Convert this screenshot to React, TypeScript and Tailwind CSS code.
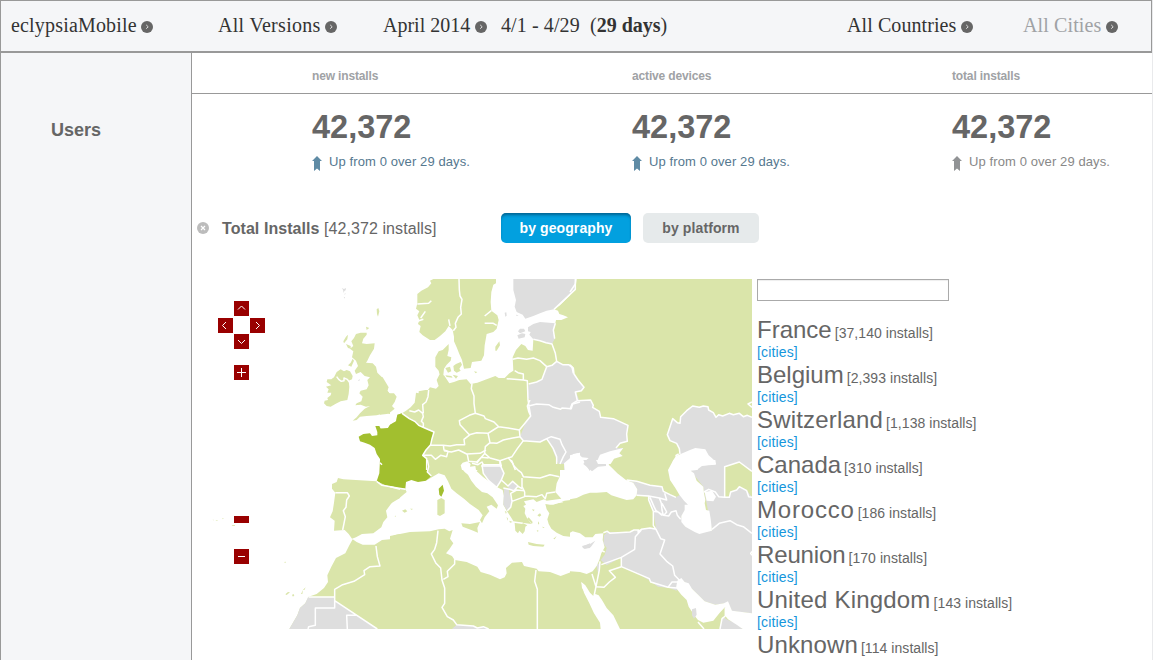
import React from "react";

type Tile = {
  x: number;
  y: number;
  land?: string;
  gray?: string;
  inner?: string;
  water?: string;
  grayIsles?: string;
  active?: string;
  borders?: string;
};

/* The map is stored as six tiles, each at three units per pixel. */
const tiles: Tile[] = [
  {
    x: 190,
    y: 270,
    land:
      "M560 118l5-4 3 10-4 16-3-8zM528 170l10 4-8 6z M498 192L512 188 530 188 530 194 520 206 516 220 530 222 554 220 552 236 540 256 532 272 528 278 548 280 558 290 562 308 576 322 584 340 594 350 592 362 600 372V432L584 430 560 436 530 438 510 440 500 450 488 452 500 442 510 430 524 416 540 408 528 410 512 404 496 406 500 400 514 394 518 380 508 370 512 362 530 358 536 346 532 330 540 322 524 318 512 306 498 312 494 302 504 288 498 272 486 262 490 244 480 236 490 228 484 214 492 204Z M460 214l8-14 6-6-2 14-10 12zM468 222l14 6 0 8-8-2zM474 286l8-8 6-12 4 6-8 18z M410 336L412 328 424 328 432 322 440 306 452 298 462 304 470 300 480 304 488 318 486 328 476 332 478 350 476 372 472 390 452 394 436 402 422 410 410 408 402 400 404 392 414 390 412 384 422 376 424 368 412 368 416 358 408 350 424 346Z",
    grayIsles: "M455 54l7 3 6-3-1 7-4 2-2 6-2-10zM463 72l4-3-2 5zM461 80l4 2-1 4zM504 332l5-6-1 7z",
    active:
      "M506 500L520 492 540 490 546 498 562 496 562 486 556 468 568 468 572 476 588 478 600 474V600H574L572 570 560 552 554 534 540 524 524 518 510 514Z",
    borders: "M440 320L446 328 454 334 462 332 462 324 472 328 478 336",
  },
  {
    x: 380,
    y: 270,
    land:
      "M0 320L8 322 18 338 26 352 22 362 28 370 42 370 50 380 44 396 36 408 44 416 32 426 20 432 0 434Z M160 27L150 32 154 40 144 52 124 62 112 72 112 100 108 116 118 124 112 136 118 150 114 162 122 168 118 186 128 196 150 210 164 210 180 198 196 184 206 168 218 180 222 200 222 214 230 232 238 252 246 270 252 296 272 294 276 276 304 272 312 256 314 226 320 192 340 186 350 176 356 150 352 136 334 122 332 96 334 66 340 44 348 40 348 27Z M346 230L358 214 360 226 350 242 346 242Z M166 262L176 244 188 240 206 222 206 240 202 258 214 262 212 272 200 284 192 296 190 316 180 318 176 302 166 290Z M196 294L210 290 214 304 204 308Z M220 288L228 282 242 276 246 284 238 296 242 302 230 308 222 302ZM196 316l18 2 4 5-18-2zM218 314l16 4-6 8zM282 304l10 2-5 4z M0 476L24 474 30 464 48 454 52 434 66 430 78 422 92 412 104 398 106 384 108 368 116 370 116 364 136 360 144 360 150 352 168 356 176 348 170 330 178 314 192 316 200 328 208 340 222 336 238 330 260 328 272 342 292 338 314 330 346 318 356 324 374 324 388 310 400 302 398 262 408 240 424 222 436 228 444 240 458 242 460 208 480 210 510 220 524 206 520 180 526 160 528 150 544 150 564 142 550 136 538 132 534 122 522 118 540 106 586 60V27H600V600H0Z",
    gray:
      "M400 27H586V56L522 118 500 122 480 130 460 138 436 146 428 134 410 126 404 110 408 90 400 60ZM444 172L460 162 480 156 526 160 520 180 524 206 516 222 498 218 480 212 460 208 448 194 452 186 444 184ZM446 344L470 336 486 328 500 290 516 286 530 274 548 284 566 284 576 292 584 320 600 348 588 364 600 398 578 400 574 416 544 416 520 410 506 404 446 408 450 390 442 380ZM446 408L470 402 506 404 540 418 574 416 578 400 600 396V600H552V582L534 580 526 560 510 520 500 510 480 516 430 512 420 500 436 460 452 438ZM304 588L330 584 360 588 364 600H310Z",
    water:
      "M246 600L242 586 248 578 262 574 272 582 270 590 286 588 288 600ZM600 548L580 552 568 566 552 580 554 600H600Z",
    grayIsles: "M374 128l5-1 1 10-4 3zM408 134l8 2-6 2zM414 184L420 176 432 176 436 184 420 190ZM412 196L426 190 436 192 434 202 416 206Z",
    active:
      "M0 476L24 474 30 464 48 454 52 434 66 430 88 446 104 454 116 466 134 474 162 486 156 506 152 524 138 540 128 556 140 566V600H0Z",
    borders:
      "M112 102L146 100 154 92M136 124L122 144M112 154L130 148M314 160L340 160 350 166M314 138L334 122M206 148L210 168M237 27L238 60 240 78 246 88 242 112 244 132 234 142 226 160 228 172 220 182M66 430L88 446 104 454 116 466 134 474 162 486 156 506 152 524 138 540 128 556 140 566V600M88 422L104 426 116 420 128 430 130 440 124 454 130 460V474M146 360L144 380 138 396 128 404 130 430M276 340L274 356 282 378 282 400 286 430 268 436 238 452 240 464 268 494 290 488 324 490 340 480 356 470 342 456 316 446 312 438 286 430M356 470L384 474 418 480 436 458 452 438 444 390 442 332 430 330 380 326M430 330V312L414 308 404 302M398 268L414 264 440 268 460 264 480 272 500 290 486 328 470 336 446 342M500 290L516 286 530 274 548 284 566 284 576 292 580 310M446 408L470 402 506 404 520 412 542 418 546 414 574 416 578 402 600 396M452 438L446 424 442 408 450 390M418 480L420 500 430 512 480 516 500 506M460 208L480 212 498 218 516 222 526 250 530 274M526 160L520 180 524 206M586 27V58L522 118M324 490L330 518 350 520 370 510 398 504 420 500 418 480M330 518L316 530 314 550 330 564 360 572 396 560 412 536 430 512M152 526L190 526 210 528 230 524 254 524 252 508 270 494M192 542L214 546 236 540 260 552 300 550 318 540M128 556L154 556 166 568 182 556 200 560 204 544 192 540 190 526M262 554L266 574 290 576 304 562 316 548M290 580L304 562 326 564M360 572L364 588 304 588M384 562L398 580 406 600M500 506L514 500 540 508 546 524 558 546 550 560 540 582M500 506L520 536 530 560 530 582",
  },
  {
    x: 570,
    y: 270,
    land: "M0 27H546V600H0Z",
    gray:
      "M0 27H18L16 42 0 66Z M0 284L10 294 12 312 24 330 42 352 34 362 16 366 22 392 62 390 70 406 68 412 88 424 92 442 130 446 174 466 170 492 172 514 150 520 138 534 160 534 124 560 90 600H0Z M546 442L532 436 520 440 508 430 490 434 478 430 458 438 446 434 438 442 430 428 416 420 414 410 400 408 388 412 368 408 350 422 332 440 330 460 322 458 308 446 300 470 292 494 300 512 320 520 328 536 330 552 340 556 346 600H546Z",
    inner: "M464 594L508 578 540 600H464Z",
    water:
      "M80 576L90 554 120 544 160 534 148 550 158 558 132 566 122 582 100 582Z M0 556L24 550 36 562 56 564 40 578 54 600H0ZM84 582L114 584 128 600H84Z M300 600L310 570 318 558 332 552 360 540 376 534 406 538 416 556 432 570 438 584 378 588 384 600Z",
    borders:
      "M18 27L16 42 0 66M0 284L10 294 12 312 24 330 42 352 34 362 16 366 22 392 62 390 70 406 68 412 88 424 92 442 130 446 174 466 170 492 172 514 150 520 138 534M22 392L6 402 0 418M546 442L532 436 520 440 508 430 490 434 478 430 458 438 446 434 438 442 430 428 416 420 414 410 400 408 388 412 368 408 350 422 332 440 330 460 322 458 308 446 300 470 292 494 300 512 320 520 328 536 330 552M546 396L534 402 546 412M326 552L318 556 322 566",
  },
  {
    x: 200,
    y: 460,
    land:
      "M396 72L410 66 414 54 430 58 530 64 556 76 600 86V114L580 122 558 152 562 172 550 186 544 202 530 212 520 220 486 222 468 232 456 236 446 222 434 210 402 212 404 182 390 172 398 154 402 128 406 98 396 86ZM458 238L470 246 488 254 524 254 546 240 570 238 582 226 600 222V507H268L292 466 300 444 316 430 326 410 350 402 372 384 384 366 382 346 394 320 408 294 436 280 448 256ZM38 179l6 1-5 1zM46 181l8 0-3 2zM66 175l5 0-2 3zM95 196l9-1 1 3-8 0zM252 306l6-1-2 4zM264 297l3 1zM256 403l8-7 6 1-10 8zM276 405l4-3 3 4-4 4zM303 402l6-12-2 12zM309 389l8-7-4 8z",
    gray: "M324 412H404V422L532 507H268L292 466 300 444 316 430Z",
    active: "M540 0H600V86L575 80 556 76 530 64 538 40Z",
    borders:
      "M326 411H404V444H346V496L326 500 324 507M442 507L440 466H470M404 422L532 507M404 412V388L428 374 462 364 494 344 492 332 510 320 540 318 532 290 528 258M406 98L442 98 448 108 440 120 438 142 430 152 436 170 432 190 428 210M530 64L546 76 572 80 600 88M540 8L546 14",
  },
  {
    x: 390,
    y: 460,
    land:
      "M0 80L46 88 50 96 40 104 26 116 0 132Z M142 120L154 114 164 120 164 160 150 168 142 164Z M112 0H240L236 8 212 12 212 22 224 36 234 44 244 62 258 80 276 96 292 100 308 112 324 136 320 146 304 134 290 140 298 154 284 172 276 190 270 180 278 166 266 150 240 132 222 116 200 100 184 86 174 64 164 46 146 40 132 48 112 60Z M214 190L240 192 270 186 262 204 264 218 244 210 218 200Z M242 0L246 12 256 12 268 24 260 34 280 52 300 66 322 82 338 90 342 108 340 134 350 152 362 170 374 190 376 212 384 220 388 212 398 222 404 214 406 200 412 196 396 188 424 192 412 176 404 160 406 146 400 138 408 134 402 124 430 118 440 126 462 118 470 122 514 116 496 96 500 70 510 48 510 0Z M466 132L480 134 490 134 524 122 560 118 600 96V230L570 218 548 214 540 230 520 228 500 218 484 206 476 192 472 178 478 160 470 148Z M414 246L440 252 464 254 460 260 430 258 416 254Z M36 152l10-4 6 6-8 4zM60 146l8 0-2 4zM14 168l4-1-2 4zM442 166l8-6 4 6-6 4zM444 184l4 6-4 4zM490 236l10-8-6 10zM426 148l8 1-4 5zM440 210l6 2-3 4zM456 200l8 2-4 2zM416 172l12 14-2 6-14-16zM358 182l10 4-8 2zM344 152l6 4-2 6zM350 170l4 6-2 6z M0 228L60 216 120 214 146 208 164 206 178 214 188 210 180 236 190 250 178 268 168 280 186 288 194 300 230 306 262 320 272 336 300 344 330 358 344 352 350 340 348 324 366 308 396 306 402 318 440 326 446 334 480 336 512 348 544 336 600 342V507H0Z",
    gray:
      "M276 14L330 16 342 40 334 60 320 80 296 62 280 40ZM354 80L368 66 382 78 372 90 358 88ZM342 84L356 86 360 108 366 124 362 142 352 152 340 134ZM502 0H528L522 10 506 12ZM186 507L200 494 250 498 262 504 280 500 296 507Z",
    water: "M574 366L600 402V424L588 404 576 384ZM474 126L490 122 514 124 520 127 490 132Z",
    grayIsles: "M576 260L600 250V264L582 266ZM580 0H600V34L588 16Z",
    active:
      "M0 0H112L116 20 112 36 124 48 108 62 84 66 64 60 48 66 46 86 0 80Z M146 86L158 74 162 92 154 110 148 104Z",
    borders:
      "M112 0L116 20 112 36 124 48M0 80L46 88M364 0L372 18 386 32 394 38 400 50 450 54 480 44 508 50M396 54L396 80 404 96 404 108 440 110 456 104 466 116 470 100 496 96M276 14H330L342 40 334 60 320 82 296 62 280 40 276 14M330 16V0M366 124L362 100 380 90 404 92M366 124L404 110M334 60L354 78 368 64 384 78 372 92 358 88 340 84M382 78L396 86M366 124L362 142 352 152M246 10L264 14 276 6 280 14M144 212L140 248 134 268 124 282 138 310 152 324 156 360 164 384V430L156 442 172 470 190 480 200 494 250 498 262 504 280 500 296 507M194 298V312L172 334 174 350 160 358M438 330L434 364 442 388V507M370 186L398 190",
  },
  {
    x: 570,
    y: 460,
    land: "M0 0H546V507H0Z",
    gray:
      "M172 60L240 76 276 80 280 94 300 104 318 112 330 104 358 130 334 170 346 200 426 212 400 80 360 30 436 10 438 0H546V460L486 454 474 428 436 434 404 424 366 386 344 366 330 358 320 392 298 384 264 380 236 360 210 344 156 320 154 292 110 316 92 300 104 284 110 264 100 250 102 226 112 216 180 216 222 206 258 206 254 180 250 152 240 130 236 110 200 106 202 88 190 68ZM458 470L474 480 500 490 518 507H448L454 490ZM80 314l8-4 2 20-6 10z",
    inner: "M464 20L508 6 546 34V112L528 88 508 82 500 90 482 96 478 110H464ZM546 274l-4 6 4 6z",
    water:
      "M0 0H124L116 14 124 22 142 40 168 60 190 68 202 88 200 106 190 118 170 120 150 114 124 106 110 96 80 98 60 98 40 104 20 114 0 118Z M0 218L8 214 30 220 46 232 68 232 76 222 100 220 98 240 104 262 94 280 88 300 80 318 68 334 50 342 30 336 0 334Z M34 366L46 376 60 398 70 408 76 402 86 406 96 420 110 444 130 466 150 507H92L90 488 72 460 58 430 42 398Z M322 362L334 354 344 366 356 370 366 386 386 406 404 424 436 434 462 430 474 424 486 452 546 460V507H518L500 494 474 478 466 468 466 440 448 460 430 482 400 488 384 480 376 470 356 440 350 420 334 404 318 384Z M310 0H436L438 12 420 14 396 18 380 30 362 32 372 40 380 62 400 80 402 100 406 120 404 130 408 150 418 152 422 176 426 212 402 218 388 222 374 216 346 200 334 186 334 168 344 150 344 134 354 134 342 122 328 104 316 84 300 60 294 30Z M404 96L426 92 438 110 430 124 410 122Z",
    grayIsles:
      "M36 258L60 252 76 242 62 262 44 266ZM366 448L378 444 380 464 372 476 366 466ZM40 12L48 0H78L84 12 108 12 108 18 84 20 66 34Z",
    borders:
      "M100 218L112 214 120 220 180 216 192 210 206 210 204 216 214 208 240 204 258 208 250 196 250 154 236 120V108L200 106M214 210L196 230 194 268 154 292 94 314M258 208L272 236 284 240 270 282 290 304 308 318 314 346 330 362M154 292V320L238 356 242 366 294 382 320 384M294 382L306 366 326 366M154 320L118 332 136 352 118 366 102 382 80 380M66 342L78 380 88 330 90 304M78 380L72 408M170 60L200 64 240 76 276 80 280 94 300 104 318 112M236 108L268 114 290 120 284 100M240 112L252 140 258 152 280 166 276 150 274 130 268 114M250 154L264 156 276 166M280 166L296 168 304 156 318 152 322 166 332 178M282 166L290 156 276 130M426 208L448 190 480 182 500 194 520 200 546 220M402 96L416 88 436 96 446 110 464 112V20L508 6 546 34M464 112H478L482 96 500 90 508 80 530 92 536 110 546 112M466 468V442M384 486L402 507M466 468L456 476 450 507M96 272L104 276M546 274l-4 6 4 6",
  },
];

const GREEN = "#dae5aa";
const GRAY = "#dedede";

function Layer({ name, fill, stroke }: { name: keyof Tile; fill: string; stroke?: string }) {
  return (
    <g fill={fill} stroke={stroke ?? "none"} strokeWidth={4.5} strokeLinejoin="round">
      {tiles.map((t, i) =>
        t[name] ? <path key={i} transform={`translate(${t.x} ${t.y}) scale(0.33333)`} d={String(t[name])} /> : null
      )}
    </g>
  );
}

function PanButton({ d, className }: { d: string; className: string }) {
  return (
    <svg viewBox="0 0 15 15" className={`size-[15px] bg-[#990000] ${className}`} fill="none" stroke="#fff" strokeWidth="1">
      <path d={d} />
    </svg>
  );
}

function Dot({ className = "" }: { className?: string }) {
  return (
    <svg viewBox="0 0 12 12" className={`size-3 shrink-0 ${className}`}>
      <circle cx="6" cy="6" r="6" fill="#666" />
      <path d="M5.2 3.9L7.2 5.8 5.2 7.7" fill="none" stroke="#e0e0e0" strokeWidth="1" />
    </svg>
  );
}

function Picker({ label, className = "" }: { label: string; className?: string }) {
  return (
    <div className={`flex items-center justify-between whitespace-nowrap ${className}`}>
      <span>{label}</span>
      <Dot className="mt-[3px]" />
    </div>
  );
}

const stats = [
  { label: "new installs", tone: "text-[#55788f]", arrow: "#5f8ba5" },
  { label: "active devices", tone: "text-[#55788f]", arrow: "#5f8ba5" },
  { label: "total installs", tone: "text-[#888]", arrow: "#919395" },
];

const countries = [
  { name: "France", installs: "37,140", tracking: "tracking-normal", cities: true },
  { name: "Belgium", installs: "2,393", tracking: "tracking-normal", cities: true },
  { name: "Switzerland", installs: "1,138", tracking: "tracking-[0.18px]", cities: true },
  { name: "Canada", installs: "310", tracking: "tracking-normal", cities: true },
  { name: "Morocco", installs: "186", tracking: "tracking-[0.8px]", cities: true },
  { name: "Reunion", installs: "170", tracking: "tracking-[-0.14px]", cities: true },
  { name: "United Kingdom", installs: "143", tracking: "tracking-[0.2px]", cities: true },
  { name: "Unknown", installs: "114", tracking: "tracking-[0.12px]", cities: false },
];

export default function App() {
  return (
    <div className="flex h-[660px] w-[1153px] overflow-hidden border-r border-[#e9eaec] bg-white font-['Liberation_Sans',Arial,sans-serif] text-[#666]">
      <div className="flex w-[1152px] shrink-0 flex-col">
        <header className="flex h-[53px] shrink-0 border border-b-2 border-[#999] bg-[#f5f6f8] pt-[9px] pl-[10px] font-['Liberation_Serif','Times_New_Roman',serif] text-[20px] leading-[31px] text-[#333]">
          <div className="flex h-[31px]">
            <Picker label="eclypsiaMobile" className="w-[142px] tracking-[0.18px]" />
            <Picker label="All Versions" className="ml-[65px] w-[119px] tracking-[0.3px]" />
            <Picker label="April 2014" className="ml-[46px] w-[104px]" />
            <span className="ml-[14px] w-[89px] tracking-[0.1px] whitespace-nowrap">4/1 - 4/29</span>
            <span className="w-[257px] whitespace-nowrap">
              (<b>29 days</b>)
            </span>
            <Picker label="All Countries" className="w-[126px] tracking-[0.08px]" />
            <Picker label="All Cities" className="ml-[50px] w-[95px] tracking-[0.12px] text-[#a0a2a5]" />
          </div>
        </header>
        <div className="flex grow">
          <aside className="w-[192px] shrink-0 border-x border-[#999] bg-[#f5f6f8] pt-[66px] pl-[50px] text-lg leading-[22px] font-bold">
            Users
          </aside>
          <main className="flex w-[960px] flex-col">
            <div className="flex h-[41px] shrink-0 border-b border-[#999] pl-[120px] text-xs leading-[47px] font-bold tracking-[-0.15px] text-[#a0a2a5]">
              {stats.map((s) => (
                <div key={s.label} className="w-[320px] shrink-0">
                  {s.label}
                </div>
              ))}
            </div>
            <div className="flex h-[119px] shrink-0 pt-[15px] pl-[120px]">
              {stats.map((s) => (
                <div key={s.label} className="w-[320px] shrink-0">
                  <div className="text-[32.5px] leading-[36px] font-bold">42,372</div>
                  <div className={`mt-[8px] flex gap-[7px] text-[13px] leading-[18px] tracking-[0.1px] whitespace-nowrap ${s.tone}`}>
                    <svg viewBox="0 0 10 15" className="mt-[3px] h-[15px] w-[10px]">
                      <path d="M5 0L10 5H8V15L5 12.5 2 15V5H0Z" fill={s.arrow} />
                    </svg>
                    <span>Up from 0 over 29 days.</span>
                  </div>
                </div>
              ))}
            </div>
            <div className="flex h-[30px] shrink-0 items-center pl-[5px]">
              <svg viewBox="0 0 12 12" className="size-3">
                <circle cx="6" cy="6" r="6" fill="#bcbcbc" />
                <path d="M4 4L8 8M8 4L4 8" stroke="#fff" strokeWidth="1.2" />
              </svg>
              <div className="ml-[13px] w-[279px] pt-[2px] text-base tracking-[0.07px] whitespace-nowrap">
                <b>Total Installs</b> [42,372 installs]
              </div>
              <button className="h-[30px] w-[130px] rounded-[5px] bg-[#02a0df] text-[14px] font-bold tracking-[0.1px] text-white shadow-[inset_0_3px_3px_-1px_rgba(0,40,70,0.5)]">
                by geography
              </button>
              <button className="ml-3 h-[30px] w-[116px] rounded-[5px] bg-[#e6eaeb] text-[14px] font-bold tracking-[0.1px] text-[#666]">
                by platform
              </button>
            </div>
            <div className="flex pt-[36px]">
              <div className="relative h-[350px] w-[560px] shrink-0">
                <svg viewBox="192 279 560 350" className="h-[350px] w-[560px]">
                  <Layer name="land" fill={GREEN} />
                  <Layer name="gray" fill={GRAY} />
                  <Layer name="inner" fill={GREEN} />
                  <Layer name="water" fill="#fff" />
                  <Layer name="grayIsles" fill={GRAY} />
                  <Layer name="active" fill="#a2bf2f" />
                  <Layer name="borders" fill="none" stroke="#fff" />
                </svg>
                <PanButton className="absolute top-[22px] left-[42px]" d="M4 8.5L7.5 5 11 8.5" />
                <PanButton className="absolute top-[39px] left-[26px]" d="M8 4L4.5 7.5 8 11" />
                <PanButton className="absolute top-[39px] left-[58px]" d="M6 4L9.5 7.5 6 11" />
                <PanButton className="absolute top-[55px] left-[42px]" d="M4 6L7.5 9.5 11 6" />
                <PanButton className="absolute top-[86px] left-[42px]" d="M3 7.5H12M7.5 3V12" />
                <div className="absolute top-[237px] left-[42px] h-[7px] w-[15px] bg-[#990000]" />
                <PanButton className="absolute top-[270px] left-[42px]" d="M4 7.5H11" />
              </div>
              <div className="ml-[5px]">
                <input className="block h-[22px] w-[192px] border border-[#aaa] shadow-[inset_0_1px_1px_#eee] outline-none" />
                <div className="mt-[16px]">
                  {countries.map((c) => (
                    <div key={c.name} className="h-[45px] whitespace-nowrap">
                      <div className="h-[26px] text-2xl leading-[26px]">
                        <span className={c.tracking}>{c.name}</span>
                        <span className="ml-[3px] text-[14px] tracking-[0.06px]">[{c.installs} installs]</span>
                      </div>
                      {c.cities && (
                        <a className="block h-[19px] text-[14px] leading-[19px] tracking-[0.15px] text-[#1496dc]">[cities]</a>
                      )}
                    </div>
                  ))}
                </div>
              </div>
            </div>
          </main>
        </div>
      </div>
    </div>
  );
}
